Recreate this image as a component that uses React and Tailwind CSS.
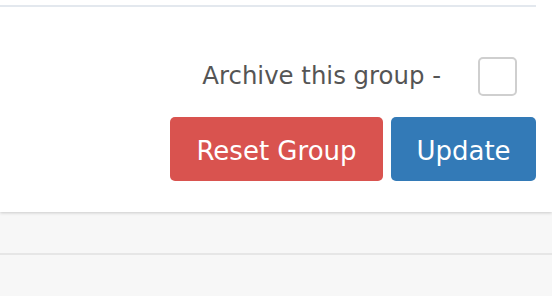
export default function App() {
  return (
    <div className="w-[552px] h-[296px] overflow-hidden bg-[#f7f7f7] font-['DejaVu_Sans',Verdana,sans-serif]">
      {/* panel */}
      <div className="h-[212px] bg-white pt-[5px] shadow-[0_1px_3px_rgba(0,0,0,0.18)]">
        <div className="h-[2px] w-[536px] bg-[#e3e8ee]" />
        <div className="flex flex-col items-end pr-[16px]">
          <div className="mt-[50px] mr-[19px] flex items-center">
            <span className="text-[24.4px] leading-none text-[#555]">
              Archive this group -
            </span>
            <input
              type="checkbox"
              className="ml-[37px] h-[39px] w-[39px] appearance-none rounded-[5px] border-2 border-[#cfcfcf] bg-white"
            />
          </div>
          <div className="mt-[21px] flex gap-[8px]">
            <button className="h-[64px] w-[213px] rounded-[5px] bg-[#d9534f] pt-[4px] text-[26px] leading-none text-white">
              Reset Group
            </button>
            <button className="h-[64px] w-[145px] rounded-[5px] bg-[#337ab7] pt-[4px] text-[26px] leading-none text-white">
              Update
            </button>
          </div>
        </div>
      </div>
      <div className="h-[41px]" />
      <div className="h-[2px] bg-[#e6e6e6]" />
    </div>
  );
}
